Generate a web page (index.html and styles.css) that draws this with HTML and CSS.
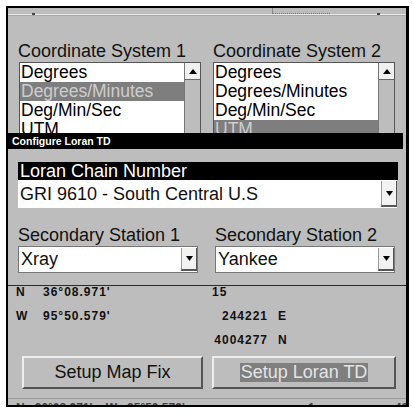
FILE: index.html
```html
<!DOCTYPE html>
<html>
<head>
<meta charset="utf-8">
<link rel="stylesheet" href="styles.css">
</head>
<body>
<div class="frame">
  <div class="topstrip"><span class="tick t1"></span><span class="tab"></span><span class="tick t2"></span></div>
  <div class="coords">
    <div class="col">
      <div class="label">Coordinate System 1</div>
      <div class="list l1">
        <div class="items">
          <div class="item">Degrees</div>
          <div class="item sel">Degrees/Minutes</div>
          <div class="item">Deg/Min/Sec</div>
          <div class="item">UTM</div>
        </div>
        <div class="scroll"><div class="up"><svg width="8" height="5" viewBox="0 0 8 5"><path d="M4 0 L8 5 L0 5 Z" fill="#000"/></svg></div></div>
      </div>
    </div>
    <div class="col">
      <div class="label">Coordinate System 2</div>
      <div class="list">
        <div class="items">
          <div class="item">Degrees</div>
          <div class="item">Degrees/Minutes</div>
          <div class="item">Deg/Min/Sec</div>
          <div class="item sel">UTM</div>
        </div>
        <div class="scroll"><div class="up"><svg width="8" height="5" viewBox="0 0 8 5"><path d="M4 0 L8 5 L0 5 Z" fill="#000"/></svg></div></div>
      </div>
    </div>
  </div>
  <div class="titlebar">Configure Loran TD</div>
  <div class="dialog">
    <div class="chainhead">Loran Chain Number</div>
    <div class="select wide"><span class="val">GRI 9610 - South Central U.S</span><span class="dd"><svg width="7" height="5" viewBox="0 0 7 5"><path d="M0 0 L7 0 L3.5 5 Z" fill="#000"/></svg></span></div>
    <div class="stations">
      <div class="col">
        <div class="label">Secondary Station 1</div>
        <div class="select"><span class="val">Xray</span><span class="dd"><svg width="7" height="5" viewBox="0 0 7 5"><path d="M0 0 L7 0 L3.5 5 Z" fill="#000"/></svg></span></div>
      </div>
      <div class="col">
        <div class="label">Secondary Station 2</div>
        <div class="select"><span class="val">Yankee</span><span class="dd"><svg width="7" height="5" viewBox="0 0 7 5"><path d="M0 0 L7 0 L3.5 5 Z" fill="#000"/></svg></span></div>
      </div>
    </div>
  </div>
  <div class="divider"></div>
  <div class="data">
    <span>N</span><span>36°08.971'</span><span class="first">15</span><span></span>
    <span>W</span><span>95°50.579'</span><span class="num">244221</span><span class="suf">E</span>
    <span></span><span></span><span class="num">4004277</span><span class="suf">N</span>
  </div>
  <div class="buttons">
    <div class="btn">Setup Map Fix</div>
    <div class="btn"><span class="hl">Setup Loran TD</span></div>
  </div>
  <div class="bottom"><div class="ghost">N&nbsp;&nbsp;&nbsp;36°08.971'&nbsp;&nbsp;&nbsp;&nbsp;W&nbsp;&nbsp;&nbsp;95°50.579'&nbsp;&nbsp;&nbsp;&nbsp;&nbsp;&nbsp;&nbsp;&nbsp;&nbsp;&nbsp;&nbsp;&nbsp;&nbsp;&nbsp;&nbsp;&nbsp;&nbsp;&nbsp;&nbsp;&nbsp;&nbsp;&nbsp;&nbsp;&nbsp;&nbsp;&nbsp;&nbsp;&nbsp;&nbsp;&nbsp;&nbsp;&nbsp;&nbsp;&nbsp;&nbsp;&nbsp;&nbsp;1&nbsp;&nbsp;&nbsp;&nbsp;&nbsp;&nbsp;&nbsp;&nbsp;&nbsp;&nbsp;&nbsp;&nbsp;&nbsp;&nbsp;&nbsp;&nbsp;&nbsp;&nbsp;&nbsp;&nbsp;&nbsp;&nbsp;&nbsp;&nbsp;4004277</div></div>
</div>
</body>
</html>
```
FILE: styles.css
```css
* { box-sizing: border-box; }
body {
  margin: 0;
  background: #fff;
  font-family: "Liberation Sans", Arial, sans-serif;
  color: #111;
}
.frame {
  margin: 6px 0 0 6px;
  width: 403px;
  height: 401px;
  border: 2px solid #000;
  border-right-width: 3px;
  background: #bdbdbd;
  display: flex;
  flex-direction: column;
  overflow: hidden;
}
.topstrip {
  height: 7px;
  flex: none;
  position: relative;
  border-bottom: 1px solid #e9e9e9;
  box-shadow: 0 1px 0 #a8a8a8;
}
.tick {
  position: absolute;
  bottom: -1px;
  width: 3px;
  height: 2px;
  background: #444;
}
.t1 { left: 24px; }
.t2 { left: 369px; }
.tab {
  position: absolute;
  left: 264px;
  top: 0;
  width: 58px;
  height: 6px;
  border-left: 1px solid #888;
  border-bottom: 1px dotted #777;
}
.coords {
  flex: none;
  height: 118px;
  overflow: hidden;
  display: grid;
  grid-template-columns: 183px 182px;
  column-gap: 12px;
  padding: 26px 0 0 10px;
}
.label {
  font-size: 18px;
  line-height: 20px;
  height: 21px;
  white-space: nowrap;
}
.list {
  width: 182px;
  height: 90px;
  border: 1px solid #555;
  background: #fff;
  display: flex;
}
.l1 { margin-left: 1px; }
.items { flex: 1; }
.item {
  height: 19px;
  line-height: 19px;
  font-size: 17.5px;
  padding-left: 1px;
  white-space: nowrap;
  color: #000;
}
.item.sel {
  background: #7e7e7e;
  color: #cdcdcd;
}
.scroll {
  width: 16px;
  border-left: 1px solid #777;
  background: #bdbdbd;
}
.up {
  height: 17px;
  background: #f0f0f0;
  border-bottom: 1px solid #666;
  display: flex;
  align-items: center;
  justify-content: center;
}
.titlebar {
  flex: none;
  height: 16px;
  margin-right: 3px;
  background: #000;
  color: #fff;
  font-weight: bold;
  font-size: 10.5px;
  line-height: 16px;
  padding-left: 4px;
}
.dialog {
  padding: 13px 8px 0 10px;
}
.chainhead {
  background: #000;
  color: #fff;
  font-size: 18px;
  line-height: 18px;
  height: 18px;
  padding-left: 2px;
}
.select {
  height: 27px;
  background: #fff;
  display: flex;
  align-items: center;
  font-size: 18px;
  border: 1px solid #777;
}
.select.wide {
  height: 28px;
  margin-right: 1px;
  border: none;
}
.val {
  padding-left: 2px;
  white-space: nowrap;
}
.dd {
  margin-left: auto;
  align-self: stretch;
  width: 16px;
  margin-top: 1px;
  margin-bottom: 1px;
  background: #f2f2f2;
  border-left: 1px solid #999;
  border-right: 1px solid #555;
  border-bottom: 2px solid #555;
  display: flex;
  align-items: center;
  justify-content: center;
}
.stations {
  display: grid;
  grid-template-columns: 180px 180px;
  column-gap: 17px;
  margin-top: 17px;
}
.divider {
  flex: none;
  height: 1px;
  background: #2a2a2a;
  margin-top: 12px;
}
.data {
  display: grid;
  grid-template-columns: 27px 168px 57px auto;
  row-gap: 12px;
  padding-left: 8px;
  font-weight: bold;
  font-size: 12px;
  line-height: 12px;
  letter-spacing: 1px;
  color: #111;
}
.data span { height: 12px; white-space: nowrap; }
.data .num { text-align: right; }
.data .first { padding-left: 1px; }
.data .suf { padding-left: 10px; }
.buttons {
  display: grid;
  grid-template-columns: 181px 184px;
  column-gap: 9px;
  padding-left: 14px;
  margin-top: 10px;
}
.btn {
  height: 33px;
  border: 2px solid;
  border-color: #ededed #555 #555 #ededed;
  font-size: 18px;
  display: flex;
  align-items: center;
  justify-content: center;
  color: #111;
}
.hl {
  background: #7f7f7f;
  color: #e4e4e4;
  line-height: 19px;
  padding: 0 1px;
}
.bottom {
  margin-top: 9px;
  height: 8px;
  border-top: 1px solid #9c9c9c;
  overflow: hidden;
}
.ghost {
  font-weight: bold;
  font-size: 12px;
  line-height: 12px;
  padding: 3px 0 0 8px;
  white-space: nowrap;
  color: #444;
}
```
